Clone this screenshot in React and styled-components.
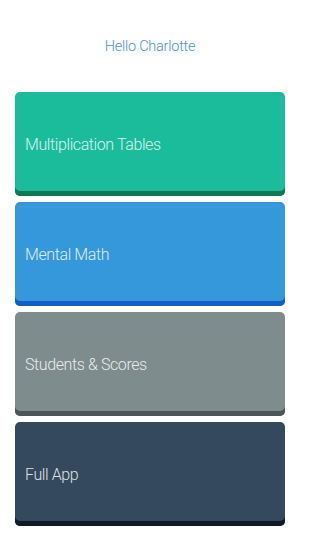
import styled, { createGlobalStyle } from "styled-components"

const GlobalStyle = createGlobalStyle`
  html, body {
    margin: 0;
    padding: 0;
    background: #ffffff;
  }
  body {
    font-family: Roboto, "Liberation Sans", sans-serif;
  }
`

const menu = [
    { title: "Multiplication Tables", face: "#1ABC9C", edge: "#0c7a55" },
    { title: "Mental Math", face: "#3498DB", edge: "#0f5fc4" },
    { title: "Students & Scores", face: "#7F8C8D", edge: "#4b5556" },
    { title: "Full App", face: "#34495E", edge: "#101b27" },
]

const App = () => {
    return (
        <>
            <GlobalStyle />
            <Page>
                <Greeting>Hello Charlotte</Greeting>
                <List>
                    {menu.map((item) => (
                        <Card key={item.title} $face={item.face} $edge={item.edge}>
                            {item.title}
                        </Card>
                    ))}
                </List>
            </Page>
        </>
    )
}

const Page = styled.div`
width: 300px;
height: 533px;
box-sizing: border-box;
padding: 38px 15px 0;
`

const Greeting = styled.div`
text-align: center;
color: #4a90e2;
font-size: 14.5px;
font-weight: 300;
letter-spacing: -0.25px;
line-height: 18px;
`

const List = styled.div`
margin-top: 36px;
display: flex;
flex-direction: column;
gap: 6px;
`

const Card = styled.button`
display: flex;
align-items: center;
height: 104px;
box-sizing: border-box;
padding: 0 10px;
border: none;
border-radius: 5px;
background: ${(p) => p.$face};
box-shadow: inset 0 -5px 0 ${(p) => p.$edge};
color: rgba(255, 255, 255, 0.85);
font-family: Roboto, "Liberation Sans", sans-serif;
font-size: 16px;
font-weight: 300;
letter-spacing: -0.4px;
text-align: left;
cursor: pointer;
`

export default App
